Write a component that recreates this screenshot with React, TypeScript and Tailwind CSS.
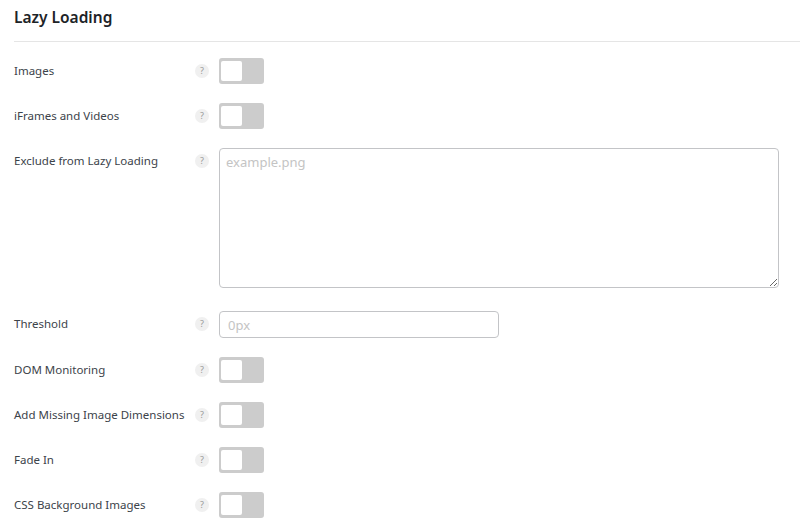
import type { ReactNode } from 'react'

const font = { fontFamily: '"Noto Sans", "Open Sans", sans-serif' }

function Help() {
  return (
    <span className="flex h-[14px] w-[14px] items-center justify-center rounded-full bg-[#f0f0f0] text-[9px] leading-none text-[#9a9a9a]">
      ?
    </span>
  )
}

function Toggle() {
  return (
    <div className="flex h-[26px] w-[45px] items-center rounded-[3px] bg-[#cccccc] pl-[2px]">
      <div className="h-[20px] w-[21px] rounded-[2px] bg-white" />
    </div>
  )
}

function Row({ label, children, className = '' }: { label: string; children: ReactNode; className?: string }) {
  return (
    <div className={`flex items-start ${className}`}>
      <div className="flex h-[25px] w-[181px] items-center text-[11.5px] text-[#3c434a]">{label}</div>
      <div className="flex h-[25px] w-[24px] items-center">
        <Help />
      </div>
      {children}
    </div>
  )
}

export default function App() {
  return (
    <div className="min-h-screen bg-white pl-[14px]" style={font}>
      <header className="flex h-[42px] items-center border-b border-[#e5e5e5]">
        <h2 className="pb-[6px] text-[15.5px] font-semibold text-[#1d2327]">Lazy Loading</h2>
      </header>

      <div className="flex flex-col gap-[19px] pt-[16px]">
        <Row label="Images">
          <Toggle />
        </Row>
        <Row label="iFrames and Videos">
          <Toggle />
        </Row>
        <Row label="Exclude from Lazy Loading" className="pb-[4px]">
          <textarea
            placeholder="example.png"
            className="h-[140px] w-[560px] rounded-[4px] border border-[#c3c4c7] px-[6px] py-[4px] text-[13px] text-[#3c434a] placeholder:text-[#c4c4c4]"
          />
        </Row>
        <Row label="Threshold">
          <input
            placeholder="0px"
            className="h-[27px] w-[280px] rounded-[4px] border border-[#c3c4c7] px-[8px] text-[13px] text-[#3c434a] placeholder:text-[#c4c4c4]"
          />
        </Row>
        <Row label="DOM Monitoring">
          <Toggle />
        </Row>
        <Row label="Add Missing Image Dimensions">
          <Toggle />
        </Row>
        <Row label="Fade In">
          <Toggle />
        </Row>
        <Row label="CSS Background Images">
          <Toggle />
        </Row>
      </div>
    </div>
  )
}
